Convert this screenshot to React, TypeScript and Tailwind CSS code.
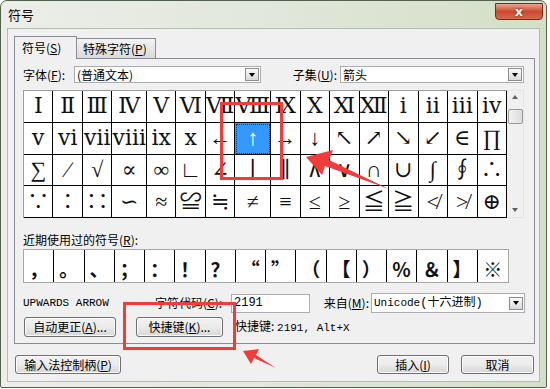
import React from 'react';

const ui = "font-['Noto_Sans_CJK_SC','Noto_Sans',sans-serif]";
const mono = "font-['Liberation_Mono','Noto_Sans_CJK_SC',monospace]";
const sym = "font-['Liberation_Serif','DejaVu_Serif','Noto_Sans_CJK_SC',serif]";

const symbols = [
  ['Ⅰ', 'Ⅱ', 'Ⅲ', 'Ⅳ', 'Ⅴ', 'Ⅵ', 'Ⅶ', 'Ⅷ', 'Ⅸ', 'Ⅹ', 'Ⅺ', 'Ⅻ', 'ⅰ', 'ⅱ', 'ⅲ', 'ⅳ'],
  ['ⅴ', 'ⅵ', 'ⅶ', 'ⅷ', 'ⅸ', 'ⅹ', '←', '↑', '→', '↓', '↖', '↗', '↘', '↙', '∈', '∏'],
  ['∑', '∕', '√', '∝', '∞', '∟', '∠', '∣', '∥', '∧', '∨', '∩', '∪', '∫', '∮', '∴'],
  ['∵', '∶', '∷', '∽', '≈', '≌', '≒', '≠', '≡', '≤', '≥', '≦', '≧', '≮', '≯', '⊕'],
];

const recent = ['，', '。', '、', '；', '：', '！', '？', '“', '”', '（', '【', '）', '％', '＆', '】', '※'];

const Acc = ({ k }: { k: string }) => (
  <>
    (<span className="underline underline-offset-1">{k}</span>)
  </>
);

const DropButton = () => (
  <div className="m-px flex h-[13px] w-[14px] shrink-0 items-center justify-center border border-[#8d8d8d] bg-gradient-to-b from-[#fafafa] to-[#d9d9d9]">
    <div className="h-0 w-0 border-x-[3.5px] border-t-[4px] border-x-transparent border-t-black" />
  </div>
);

const Combo = ({ children, className }: { children: React.ReactNode; className: string }) => (
  <div className={`flex items-center border border-[#abadb3] bg-white ${className}`}>
    <div className="flex-1 overflow-hidden whitespace-nowrap pl-[2px] text-[12px] leading-[15px]">{children}</div>
    <DropButton />
  </div>
);

const Button = ({ children, className }: { children: React.ReactNode; className: string }) => (
  <div
    className={`flex items-center justify-center rounded-[3px] border border-[#707070] bg-gradient-to-b from-[#f2f2f2] via-[#ebebeb] to-[#d6d6d6] text-[12px] leading-none text-black shadow-[inset_0_0_0_1px_#fbfbfb] ${className}`}
  >
    {children}
  </div>
);

const Scrollbar = () => (
  <div className="flex h-[128px] w-[17px] flex-col items-center border-y border-r border-[#e4e4e4] bg-[#f0f0f0]">
    <div className="mt-[4px] h-0 w-0 border-x-[3.5px] border-b-[4px] border-x-transparent border-b-[#606060]" />
    <div className="mt-[10px] h-[15px] w-[15px] rounded-[2px] border border-[#9a9a9a] bg-gradient-to-r from-[#f3f3f3] to-[#dcdcdc]" />
    <div className="mt-auto mb-[5px] h-0 w-0 border-x-[3.5px] border-t-[4px] border-x-transparent border-t-[#606060]" />
  </div>
);

const SymbolGrid = () => (
  <div className="grid h-[128px] w-[484px] grid-cols-[repeat(16,1fr)] grid-rows-[repeat(4,1fr)] border-l border-t border-[#9c9c9c] bg-white">
    {symbols.map((row, r) =>
      row.map((s, c) => {
        const active = r === 1 && c === 7;
        return (
          <div
            key={`${r}-${c}`}
            className={`flex items-center justify-center border-b border-r border-black ${sym} text-[22px] leading-none ${
              active ? 'bg-[#3399ff] text-white outline-1 outline-dotted -outline-offset-2 outline-[#333]' : 'text-[#111]'
            }`}
          >
            {s}
          </div>
        );
      })
    )}
  </div>
);

const RecentGrid = () => (
  <div className="grid h-[34px] w-[486px] grid-cols-[repeat(16,1fr)] border border-[#a8a8a8] bg-white">
    {recent.map((s, i) => (
      <div
        key={i}
        className={`flex items-center justify-center pt-[4px] text-[19px] font-bold leading-none text-[#111] ${
          i < 15 ? 'border-r border-black' : ''
        }`}
      >
        {s}
      </div>
    ))}
  </div>
);

const Annotations = () => (
  <svg className="pointer-events-none absolute left-0 top-0" width="550" height="389" viewBox="0 0 550 389">
    <rect x="221.5" y="103.5" width="60" height="75" fill="none" stroke="#f23b3b" strokeWidth="3" />
    <rect x="124.5" y="303.5" width="110" height="45" fill="none" stroke="#f23b3b" strokeWidth="3" />
    <polygon points="306,157 333,150 329,160 389,189 325,166 322,175" fill="#f23b3b" />
    <polygon points="243,351 259,349 256,355 276,368 254,358 251,364" fill="#f23b3b" />
  </svg>
);

export default function App() {
  return (
    <div className={`relative h-[389px] w-[550px] overflow-hidden bg-white ${ui}`}>
      <div className="flex h-[388px] w-[547px] flex-col rounded-t-[7px] rounded-b-[2px] border border-[#52604f] bg-gradient-to-r from-[#eceee9] via-[#e1e7da] to-[#d3dfc6]">
        {/* title bar */}
        <div className="flex h-[27px] shrink-0 items-start">
          <span className="ml-[7px] mt-[6px] text-[13px] leading-[16px] text-black">符号</span>
          <div className="ml-auto mr-[3px] mt-[2px] flex h-[17px] w-[48px] items-center justify-center rounded-b-[4px] border border-[#7a2a1c] bg-gradient-to-b from-[#e9a48f] via-[#c94a2e] to-[#d9674c]">
            <span className="font-['DejaVu_Sans',sans-serif] text-[13px] font-bold leading-none text-white [text-shadow:0_0_2px_#3a0d05]">x</span>
          </div>
        </div>

        {/* client area */}
        <div className="mx-[6px] flex h-[354px] flex-col border border-[#b4bcb0] bg-[#f0f0f0]">
          {/* tabs */}
          <div className="ml-[6px] mt-[7px] flex h-[22px] items-end">
            <div className="relative z-10 -mb-px flex h-[23px] w-[63px] items-center border border-b-0 border-[#898c95] bg-[#f0f0f0] pl-[7px] text-[12px] leading-none">
              符号<Acc k="S" />
            </div>
            <div className="flex h-[20px] w-[79px] items-center border border-l-0 border-b-0 border-[#898c95] bg-gradient-to-b from-[#f3f3f3] to-[#dadada] pl-[6px] text-[12px] leading-none">
              特殊字符<Acc k="P" />
            </div>
          </div>

          {/* tab panel */}
          <div className="ml-[6px] flex h-[286px] w-[521px] flex-col border border-[#898c95] bg-[#f0f0f0]">
            <div className="ml-[8px] mt-[7px] flex h-[17px] items-center text-[12px] leading-none">
              <span className="w-[51px]">
                字体<Acc k="F" />:
              </span>
              <Combo className="h-[17px] w-[187px]">(普通文本)</Combo>
              <span className="w-[79px] pr-[3px] text-right">
                子集<Acc k="U" />:
              </span>
              <Combo className="h-[17px] w-[184px]">箭头</Combo>
            </div>

            <div className="ml-[8px] mt-[7px] flex">
              <SymbolGrid />
              <Scrollbar />
            </div>

            <div className="ml-[8px] mt-[14px] h-[16px] text-[12px] leading-[16px]">
              近期使用过的符号<Acc k="R" />:
            </div>
            <div className="ml-[8px] mt-px">
              <RecentGrid />
            </div>

            <div className="ml-[8px] mt-[10px] flex h-[20px] items-center text-[12px] leading-none">
              <span className={`w-[132px] text-[11px] ${mono}`}>UPWARDS ARROW</span>
              <span className="w-[76px]">
                字符代码<Acc k="C" />:
              </span>
              <div className={`flex h-[19px] w-[79px] items-center border border-[#abadb3] bg-white pl-[2px] text-[12px] ${mono}`}>
                2191
              </div>
              <span className="w-[61px] pr-[2px] text-right">
                来自<Acc k="M" />:
              </span>
              <Combo className={`h-[20px] w-[154px] ${mono}`}>
                <span className="text-[11px]">Unicode</span>(十六进制)
              </Combo>
            </div>

            <div className="ml-[9px] mt-[4px] flex h-[20px] items-center">
              <Button className="h-[20px] w-[92px]">
                自动更正<Acc k="A" />...
              </Button>
              <Button className="ml-[20px] h-[20px] w-[87px]">
                快捷键<Acc k="K" />...
              </Button>
              <span className="ml-[12px] text-[12px] leading-none">
                快捷键: <span className={`text-[11px] ${mono}`}>2191, Alt+X</span>
              </span>
            </div>
          </div>

          {/* bottom buttons */}
          <div className="mt-[11px] flex items-center">
            <Button className="ml-[7px] h-[19px] w-[106px]">
              输入法控制柄<Acc k="P" />
            </Button>
            <Button className="ml-auto h-[19px] w-[72px] border-[#3c7fb1] from-[#eaf6fd] via-[#d9f0fc] to-[#a7d9f5] shadow-[inset_0_0_0_1px_#e4f4fc]">
              插入<Acc k="I" />
            </Button>
            <Button className="ml-[12px] mr-[5px] h-[19px] w-[73px]">取消</Button>
          </div>
        </div>
      </div>
      <Annotations />
    </div>
  );
}
